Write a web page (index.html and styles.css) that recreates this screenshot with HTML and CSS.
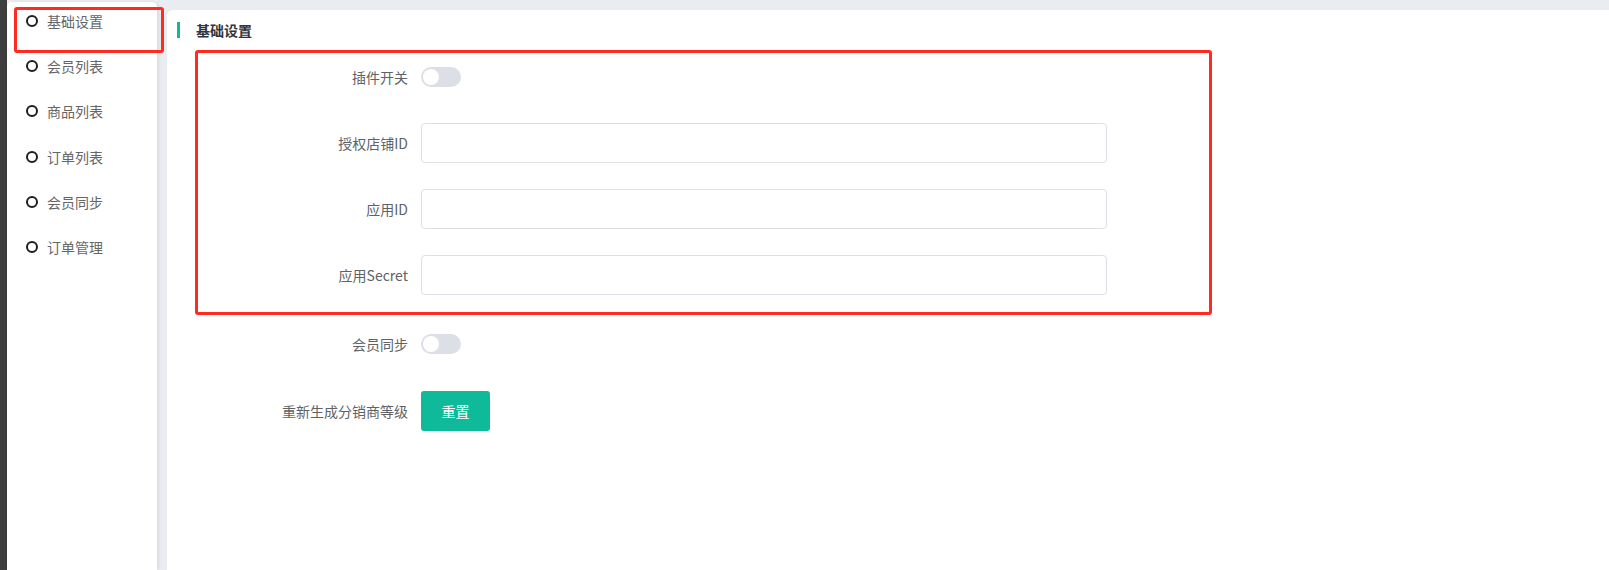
FILE: index.html
```html
<!DOCTYPE html>
<html lang="zh-CN">
<head>
<meta charset="utf-8">
<title>基础设置</title>
<link rel="stylesheet" href="styles.css">
</head>
<body>
<div class="app">
  <div class="dark-strip"></div>
  <aside class="sidebar">
    <ul class="menu">
      <li class="menu-item"><span class="dot"></span>基础设置</li>
      <li class="menu-item"><span class="dot"></span>会员列表</li>
      <li class="menu-item"><span class="dot"></span>商品列表</li>
      <li class="menu-item"><span class="dot"></span>订单列表</li>
      <li class="menu-item"><span class="dot"></span>会员同步</li>
      <li class="menu-item"><span class="dot"></span>订单管理</li>
    </ul>
  </aside>
  <main class="main">
    <section class="panel">
      <h2 class="panel-title">基础设置</h2>
      <div class="form">
        <div class="highlight-box">
          <div class="form-row">
            <label class="form-label">插件开关</label>
            <span class="switch"><span class="knob"></span></span>
          </div>
          <div class="form-row">
            <label class="form-label">授权店铺ID</label>
            <input class="text-input" type="text">
          </div>
          <div class="form-row">
            <label class="form-label">应用ID</label>
            <input class="text-input" type="text">
          </div>
          <div class="form-row last">
            <label class="form-label">应用Secret</label>
            <input class="text-input" type="text">
          </div>
        </div>
        <div class="form-row outer">
          <label class="form-label">会员同步</label>
          <span class="switch"><span class="knob"></span></span>
        </div>
        <div class="form-row outer">
          <label class="form-label">重新生成分销商等级</label>
          <button class="btn-primary" type="button">重置</button>
        </div>
      </div>
    </section>
  </main>
</div>
<div class="annot-side"></div>
</body>
</html>
```
FILE: styles.css
```css
html, body {
  margin: 0;
  padding: 0;
  height: 100%;
}
body {
  background: #eef1f4;
  font-family: "Noto Sans CJK SC", "Noto Sans", "Liberation Sans", sans-serif;
  font-size: 14px;
  overflow: hidden;
  position: relative;
}
.app {
  display: flex;
  height: 570px;
}
.dark-strip {
  width: 7px;
  flex: none;
  background: #3e3e3e;
}
.sidebar {
  width: 150px;
  flex: none;
  margin-top: 2px;
  background: #fff;
  border-radius: 5px 5px 0 0;
  box-shadow: 1px 0 4px rgba(0, 0, 0, 0.10);
  position: relative;
  z-index: 1;
}
.menu {
  list-style: none;
  margin: 0;
  padding: 9px 0 0 19px;
}
.menu-item {
  display: flex;
  align-items: center;
  height: 20px;
  line-height: 20px;
  margin-bottom: 25.2px;
  color: #666;
  font-size: 14px;
}
.dot {
  width: 8px;
  height: 8px;
  border: 2px solid #1e1e1e;
  border-radius: 50%;
  margin-right: 9px;
  flex: none;
}
.main {
  flex: 1;
  background: #e9ecf0;
  padding: 10px 0 0 10px;
}
.panel {
  background: #fff;
  height: 100%;
  border-radius: 6px 0 0 0;
  padding: 12px 0 0 0;
  box-sizing: border-box;
}
.panel-title {
  margin: 0 0 12px 10px;
  height: 16px;
  line-height: 16px;
  border-left: 3px solid #12b896;
  padding-left: 16px;
  font-size: 14px;
  font-weight: bold;
  color: #303340;
}
.form {
  margin-left: 28px;
}
.highlight-box {
  width: 1011px;
  border: 3px solid #ff2b20;
  border-radius: 3px;
  padding: 4px 0 17px 0;
  margin-bottom: 9px;
}
.form-row {
  display: flex;
  align-items: center;
  height: 40px;
  margin-bottom: 26px;
}
.form-row.last {
  margin-bottom: 0;
}
.form-row.outer {
  padding-left: 3px;
  margin-bottom: 27px;
}
.form-label {
  width: 210px;
  padding-right: 13px;
  text-align: right;
  color: #606266;
  font-size: 14px;
  flex: none;
}
.text-input {
  width: 686px;
  height: 40px;
  box-sizing: border-box;
  border: 1px solid #dcdfe6;
  border-radius: 4px;
  background: #fff;
  padding: 0 12px;
  margin: 0;
  font: inherit;
  outline: none;
}
.switch {
  width: 40px;
  height: 20px;
  border-radius: 10px;
  background: #dcdfe6;
  position: relative;
  display: inline-block;
}
.knob {
  position: absolute;
  top: 2px;
  left: 2px;
  width: 16px;
  height: 16px;
  border-radius: 50%;
  background: #fff;
}
.btn-primary {
  width: 69px;
  height: 40px;
  border: none;
  border-radius: 3px;
  background: #0fba9a;
  color: #fff;
  font: inherit;
  font-size: 14px;
  padding: 0;
}
.annot-side {
  position: absolute;
  left: 14px;
  top: 7px;
  width: 144px;
  height: 40px;
  border: 3px solid #ff2b20;
  border-radius: 3px;
  z-index: 5;
}
```
